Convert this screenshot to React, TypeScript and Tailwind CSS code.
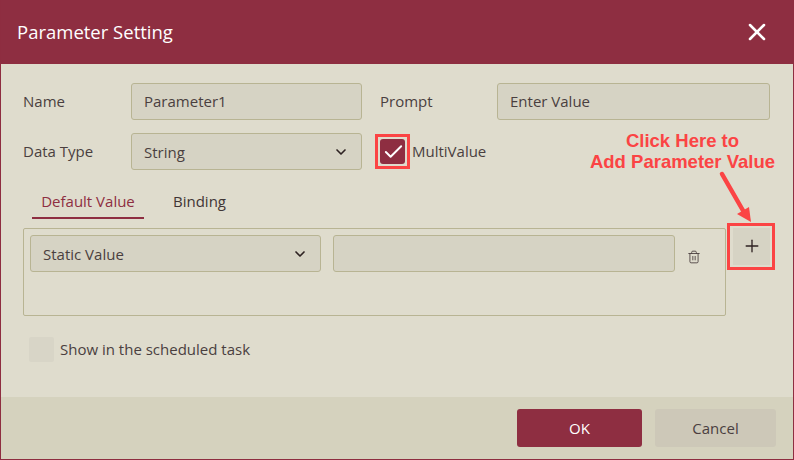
import React from 'react';
import { ChevronDown, Plus, Trash2, X, Check } from 'lucide-react';

const Field: React.FC<{ className: string; value?: string; select?: boolean }> = ({ className, value, select }) => (
  <div className={`h-[37px] flex items-center justify-between pl-[12px] pr-[12px] bg-[#d6d3c4] border border-[#b8b493] rounded-[3px] text-[15px] text-[#4a3f3f] ${className}`}>
    <span className={select ? 'pt-[2px]' : ''}>{value}</span>
    {select && <ChevronDown className="w-[16px] h-[16px] text-[#2e2222]" strokeWidth={2.5} />}
  </div>
);

export default function App() {
  return (
    <div className="relative w-[794px] h-[460px] flex flex-col bg-[#dfdccd] border-x border-b border-[#8e2d40] font-['Open_Sans',sans-serif] text-[15px] text-[#4a3f3f] overflow-hidden">
      <div className="-mx-px h-[64px] shrink-0 flex items-center justify-between pl-[17px] pr-[23px] bg-[#8e2e41] text-white">
        <span className="text-[18.5px]">Parameter Setting</span>
        <X className="w-[28px] h-[28px]" strokeWidth={2.2} />
      </div>

      <div className="flex-1 pt-[19px] pl-[22px]">
        <div className="flex items-center">
          <span className="w-[108px]">Name</span>
          <Field className="w-[231px]" value="Parameter1" />
          <span className="w-[117px] ml-[18px]">Prompt</span>
          <Field className="w-[273px]" value="Enter Value" />
        </div>

        <div className="flex items-center mt-[13px]">
          <span className="w-[108px]">Data Type</span>
          <Field className="w-[231px]" value="String" select />
          <div className="ml-[18px] w-[25px] h-[25px] rounded-[3px] bg-[#8e2e41] flex items-center justify-center">
            <Check className="w-[24px] h-[24px] ml-[2px] text-white" strokeWidth={2} />
          </div>
          <span className="ml-[7px]">MultiValue</span>
        </div>

        <div className="flex mt-[13px] ml-[9px] h-[36px]">
          <div className="w-[112px] h-[36px] pt-[7px] text-center text-[#8e2e41] border-b-2 border-[#8e2e41]">Default Value</div>
          <div className="ml-[29px] pt-[7px] text-[#3f3535]">Binding</div>
        </div>

        <div className="flex items-start mt-[9px]">
          <div className="w-[703px] h-[88px] p-[6px] flex items-start border border-[#b8b493] rounded-[2px]">
            <Field className="w-[291px]" value="Static Value" select />
            <Field className="w-[342px] ml-[12px]" />
            <Trash2 className="w-[14px] h-[14px] ml-[12px] mt-[15px] text-[#4a3f3f]" strokeWidth={1.5} />
          </div>
          <button className="ml-[7px] w-[37px] h-[37px] flex items-center justify-center bg-[#d6d3c4]">
            <Plus className="w-[20px] h-[20px] -mt-[1px] text-[#2e2222]" strokeWidth={1.6} />
          </button>
        </div>

        <div className="flex items-center mt-[21px] ml-[6px]">
          <div className="w-[25px] h-[25px] rounded-[2px] bg-[#d8d5c7]" />
          <span className="ml-[6px]">Show in the scheduled task</span>
        </div>
      </div>

      <div className="h-[62px] shrink-0 flex items-start justify-end gap-[13px] pt-[12px] pr-[17px] bg-[#d5d2be]">
        <button className="w-[125px] h-[38px] rounded-[3px] bg-[#8e2e41] text-white">OK</button>
        <button className="w-[121px] h-[38px] rounded-[3px] bg-[#cdc8b8] text-[#4a3f3f]">Cancel</button>
      </div>

      {/* annotations drawn over the dialog */}
      <div className="absolute left-[374px] top-[134px] w-[35px] h-[35px] border-[3px] border-[#fb4444]" />
      <div className="absolute left-[726px] top-[223px] w-[48px] h-[47px] border-[3px] border-[#fb4444]" />
      <div className="absolute left-[560px] top-[130px] w-[243px] text-center font-['Liberation_Sans',sans-serif] font-bold text-[18.5px] leading-[21px] text-[#fb4444]">
        Click Here to<br />Add Parameter Value
      </div>
      <svg className="absolute left-[715px] top-[170px]" width="40" height="54" viewBox="0 0 40 54">
        <path d="M6 4 L29 44" stroke="#fb4444" strokeWidth="4.5" strokeLinecap="round" fill="none" />
        <path d="M35 52 L21 44 L33 37 Z" fill="#fb4444" />
      </svg>
    </div>
  );
}
